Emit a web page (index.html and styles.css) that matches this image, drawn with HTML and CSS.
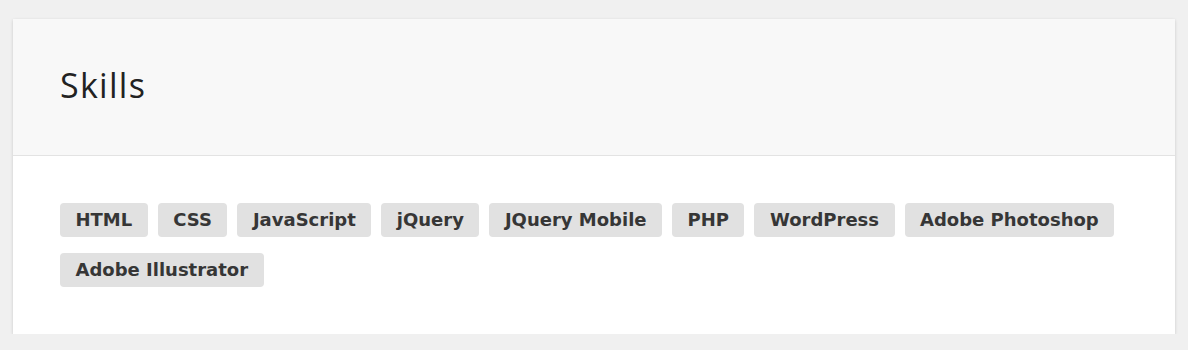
FILE: index.html
```html
<!DOCTYPE html>
<html><head><meta charset="utf-8"><link rel="stylesheet" href="styles.css"></head>
<body>
<section class="card">
  <header class="card-header"><h2 class="card-title">Skills</h2></header>
  <div class="card-body">
    <ul class="tags">
      <li class="tag">HTML</li>
      <li class="tag">CSS</li>
      <li class="tag">JavaScript</li>
      <li class="tag">jQuery</li>
      <li class="tag">JQuery Mobile</li>
      <li class="tag">PHP</li>
      <li class="tag">WordPress</li>
      <li class="tag">Adobe Photoshop</li>
      <li class="tag">Adobe Illustrator</li>
    </ul>
  </div>
</section>
</body></html>
```
FILE: styles.css
```css
html,body{margin:0;padding:0}
body{background:#f0f0f0;font-family:"Open Sans",sans-serif;padding:19px 13px 0 13px}
.card{background:#fff;box-shadow:0 1px 3px rgba(0,0,0,.16);}
.card-header{background:#f8f8f8;padding:46px 47px 50px;border-bottom:1px solid #e3e3e3}
.card-title{margin:0;font-weight:400;font-size:34px;line-height:40px;letter-spacing:1.3px;color:#222}
.card-body{padding:47px 47px 47px}
.tags{list-style:none;margin:0;padding:0;display:flex;flex-wrap:wrap;gap:16px 10px}
.tag{background:#e1e1e1;border-radius:4px;height:34px;line-height:34px;padding:0 15.5px;font-family:"DejaVu Sans",sans-serif;font-size:18px;font-weight:700;color:#363636}
```
